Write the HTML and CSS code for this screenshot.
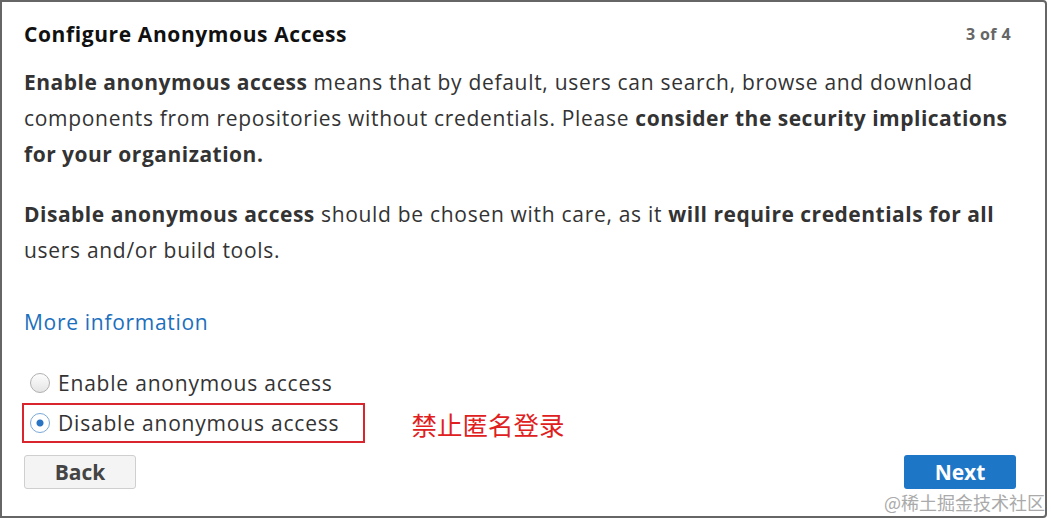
FILE: index.html
```html
<!DOCTYPE html>
<html lang="en">
<head>
    <meta charset="UTF-8">
    <title>Configure Anonymous Access</title>
    <link rel="stylesheet" href="styles.css">
</head>

<body>
    <div class="wizard">
        <div class="header">
            <h1>Configure Anonymous Access</h1>
            <span class="step">3 of 4</span>
        </div>

        <p><b>Enable anonymous access</b> means that by default, users can search, browse and download
            components from repositories without credentials. Please <b>consider the security implications
            for your organization.</b></p>

        <p class="second"><b>Disable anonymous access</b> should be chosen with care, as it <b>will require credentials for all</b>
            users and/or build tools.</p>

        <a href="#" class="more">More information</a>

        <div class="options">
            <label class="option">
                <span class="radio"></span>
                Enable anonymous access
            </label>
            <div class="row">
                <label class="option marked">
                    <span class="radio checked"></span>
                    Disable anonymous access
                </label>
                <span class="note">禁止匿名登录</span>
            </div>
        </div>

        <div class="footer">
            <button class="back">Back</button>
            <button class="next">Next</button>
        </div>

        <span class="watermark">@稀土掘金技术社区</span>
    </div>
</body>

</html>
```

FILE: styles.css
```css
body {
    margin: 0;
    background-color: #fff;
    font-family: "Open Sans", Arial, sans-serif;
    color: #333;
}

.wizard {
    position: relative;
    box-sizing: border-box;
    width: 1047px;
    height: 518px;
    border: 2px solid #666;
    border-radius: 0 4px 4px 0;
    padding: 14px 29px 0 22px;
}

.header {
    display: flex;
    justify-content: space-between;
    align-items: center;
    height: 36px;
}

h1 {
    margin: 0;
    font-size: 21px;
    font-weight: bold;
    letter-spacing: 0.6px;
    color: #111;
}

.step {
    margin-right: 5px;
    font-size: 16px;
    font-weight: bold;
    letter-spacing: 0.4px;
    color: #666;
}

p {
    margin: 12px 0 0;
    font-size: 21px;
    line-height: 36px;
    letter-spacing: 0.7px;
}

p b {
    letter-spacing: 0.5px;
}

p.second {
    margin-top: 24px;
}

.more {
    display: block;
    width: fit-content;
    margin-top: 36px;
    font-size: 21px;
    line-height: 36px;
    letter-spacing: 0.7px;
    color: #1b6fbd;
    text-decoration: none;
}

.options {
    margin-top: 23px;
}

.row {
    display: flex;
    align-items: center;
}

.option {
    display: flex;
    align-items: center;
    width: fit-content;
    height: 36px;
    margin-left: -2px;
    padding: 0 24px 0 6px;
    border: 2px solid transparent;
    font-size: 21px;
    letter-spacing: 0.8px;
    color: #333;
}

.option.marked {
    border-color: #d9262e;
}

.radio {
    box-sizing: border-box;
    width: 20px;
    height: 20px;
    margin-right: 8px;
    border: 1px solid #b0b0b0;
    border-radius: 50%;
    background: linear-gradient(#fdfdfd, #e4e4e4);
}

.radio.checked {
    border-color: #7aa8d6;
    background: radial-gradient(circle, #2a74c4 0 3px, #fff 4px);
}

.note {
    margin-left: 46px;
    font-family: "Noto Sans CJK SC", sans-serif;
    font-size: 25.5px;
    color: #e02020;
}

.footer {
    display: flex;
    justify-content: space-between;
    margin-top: 12px;
}

button {
    width: 112px;
    height: 34px;
    border-radius: 3px;
    font-family: "Open Sans", Arial, sans-serif;
    font-size: 21px;
    font-weight: bold;
    cursor: pointer;
}

.back {
    background-color: #f4f4f4;
    border: 1px solid #cfcfcf;
    color: #444;
}

.next {
    background-color: #1d76c6;
    border: none;
    color: #fff;
}

.watermark {
    position: absolute;
    right: 0;
    bottom: 1px;
    font-family: "Noto Sans CJK SC", sans-serif;
    font-size: 18px;
    color: #aaa;
}
```
